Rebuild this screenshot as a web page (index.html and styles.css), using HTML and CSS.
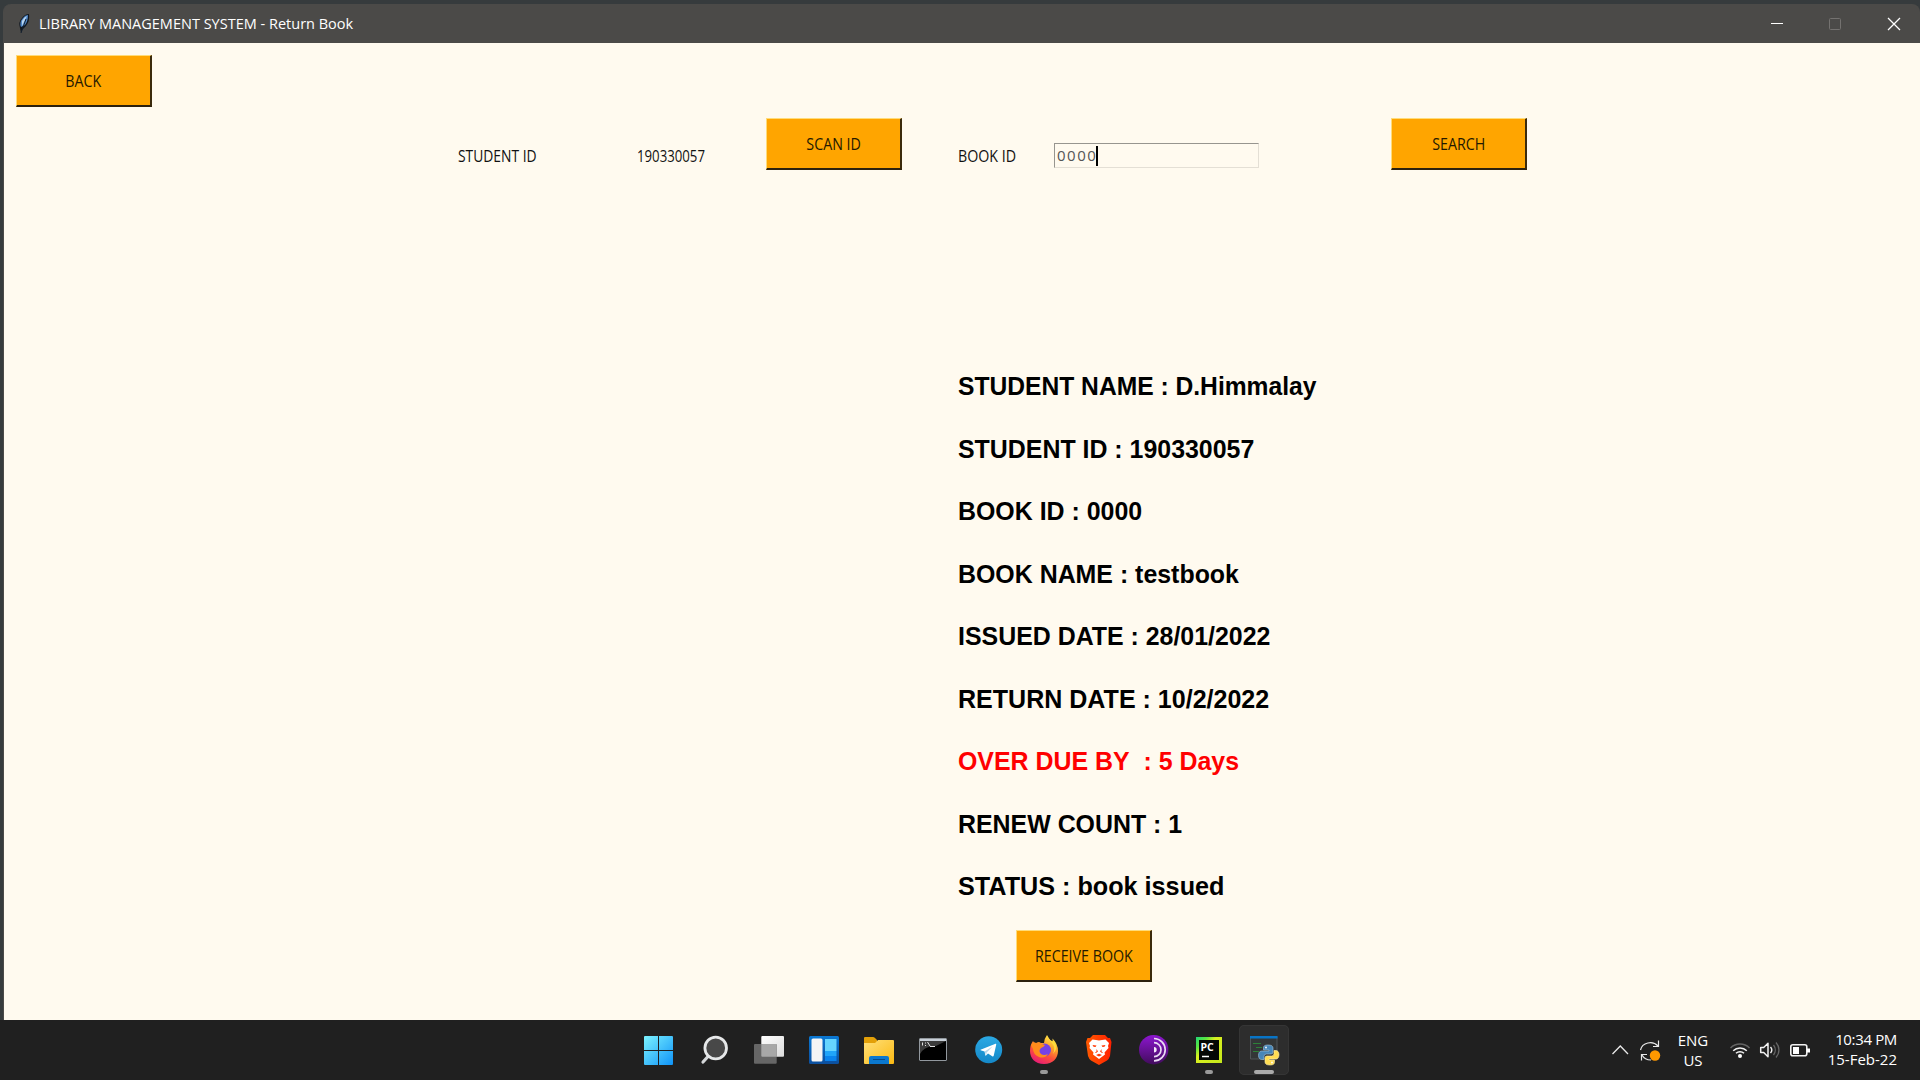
FILE: index.html
```html
<!DOCTYPE html>
<html lang="en">
<head>
<meta charset="utf-8">
<title>LIBRARY MANAGEMENT SYSTEM - Return Book</title>
<link rel="stylesheet" href="styles.css">
</head>
<body>
<div class="desktop">
  <main class="window">
    <header class="titlebar">
      <svg class="feather" width="12" height="20" viewBox="0 0 12 20"><path d="M3 19 2 14Q0 8 4 4 7 0 11 0 12 7 8 12L4 16z" fill="#111820"/><path d="M3 13Q1 8 5 4 7 1 10 1 10 7 7 11z" fill="#4f86c6"/><path d="M4 12 9 2Q6 3 4 7z" fill="#b9d5ee"/><path d="M3 19 8 5" stroke="#14202e"/></svg>
      <h1 class="title"><span class="fit fit-title">LIBRARY MANAGEMENT SYSTEM - Return Book</span></h1>
      <svg class="controls" width="130" height="14" viewBox="0 0 130 14" fill="none"><path d="M0 6.5h12" stroke="#fff"/><rect x="58.500" y="1.500" width="11" height="11" rx="1" stroke="#747270"/><path d="m117 1 12 12m0-12-12 12" stroke="#fff" stroke-width="1.300"/></svg>
    </header>
    <div class="client">
      <button class="btn"><span class="fit">BACK</span></button>
      <form class="query">
        <label class="label label-student"><span class="fit">STUDENT ID</span></label>
        <output class="label label-number"><span class="fit">190330057</span></output>
        <button class="btn" type="button"><span class="fit">SCAN ID</span></button>
        <label class="label label-book"><span class="fit">BOOK ID</span></label>
        <div class="entry"><span class="entry-text">0000</span><span class="caret"></span></div>
        <button class="btn btn-search" type="button"><span class="fit">SEARCH</span></button>
      </form>
      <section class="details">
        <p class="name">STUDENT NAME : D.Himmalay</p>
        <p>STUDENT ID : 190330057</p>
        <p>BOOK ID : 0000</p>
        <p>BOOK NAME : testbook</p>
        <p>ISSUED DATE : 28/01/2022</p>
        <p class="return-date">RETURN DATE : 10/2/2022</p>
        <p class="overdue">OVER DUE BY&nbsp; : 5 Days</p>
        <p>RENEW COUNT : 1</p>
        <p class="status-line">STATUS : book issued</p>
      </section>
      <button class="btn btn-receive"><span class="fit">RECEIVE BOOK</span></button>
    </div>
  </main>
  <footer class="taskbar">
    <nav class="apps">
      <svg class="app" viewBox="0 0 50 50"><defs><linearGradient id="win" x1="10" y1="11" x2="39" y2="40" gradientUnits="userSpaceOnUse"><stop stop-color="#7cf3ff"/><stop offset="1" stop-color="#0f93f8"/></linearGradient></defs><path d="M11 11h13v14H10V12q0-1 1-1zM25 11h13q1 0 1 1v13H25zM10 26h14v14H11q-1 0-1-1zM25 26h14v13q0 1-1 1H25z" fill="url(#win)"/></svg>
      <svg class="app" viewBox="0 0 50 50"><path d="m19 31.500-5 5.500" stroke="#d5d8da" stroke-width="3.200" stroke-linecap="round"/><circle cx="26.700" cy="23" r="10.800" fill="#484848" stroke="#e6e8e9" stroke-width="2.800"/></svg>
      <svg class="app" viewBox="0 0 50 50"><defs><linearGradient id="tv" x1="0" y1="0" x2="1" y2="1"><stop stop-color="#fff"/><stop offset="1" stop-color="#dcdcdc"/></linearGradient></defs><rect x="17.300" y="11" width="22.700" height="20.700" rx="1" fill="url(#tv)"/><rect x="10" y="19" width="22.700" height="19.700" rx="1" fill="#666"/><path d="M17.300 19h15.400v12.700H18.300q-1 0-1-1z" fill="#a8a8a8"/></svg>
      <svg class="app" viewBox="0 0 50 50"><defs><linearGradient id="wd" x1="0" y1="0" x2="0" y2="1"><stop stop-color="#0a78d4"/><stop offset="1" stop-color="#0c4f9e"/></linearGradient></defs><rect x="10" y="11" width="30" height="28" rx="1.500" fill="url(#wd)"/><rect x="12.500" y="13.500" width="11" height="23" rx="1.500" fill="#f5f5f5"/><path d="M26 14h11.500v12H26z" fill="#66d5ff"/><path d="M26 26h11.500v5H26z" fill="#20a5fa"/><path d="M26 31h11.500v5H26z" fill="#0a84ee"/></svg>
      <svg class="app" viewBox="0 0 50 50"><defs><linearGradient id="fd" x1="0" y1="0" x2="1" y2="1"><stop stop-color="#ffe07a"/><stop offset="1" stop-color="#fbb912"/></linearGradient></defs><path d="M10 20v-7q0-1 1-1h8q1 0 2 1l2 2v5z" fill="#e3a008"/><path d="M10 18h11l3-3h15q1 0 1 1v22q0 1-1 1H11q-1 0-1-1z" fill="url(#fd)"/><path d="M15 39v-6q0-2 2-2h16q2 0 2 2v6z" fill="#0b78cf"/><path d="M19 34.500h12" stroke="#074a89"/></svg>
      <svg class="app" viewBox="0 0 50 50"><rect x="10.500" y="13.500" width="27" height="22" rx=".5" fill="#000" stroke="#92989e"/><path d="M11 14h26v2H11z" fill="#c8d0d8"/><path d="M11 16h26l-10 5q-9 0-14 5l-2 3z" fill="#3b3b3b"/><path d="M13.500 17.500v3m3-3v1m0 1.500v1m2-4 2.500 4m0 .5h5" stroke="#e0e0e0" fill="none"/></svg>
      <svg class="app" viewBox="0 0 50 50"><defs><linearGradient id="tg" x1="0" y1="0" x2="0" y2="1"><stop stop-color="#2ba9e4"/><stop offset="1" stop-color="#1588c8"/></linearGradient></defs><circle cx="24.700" cy="24.700" r="13.500" fill="url(#tg)"/><path d="m16.500 24.700 15-6q1-.3.700 1l-2.500 11q-.4 1.300-1.500.5L24 28.500l-2 2q-.7.500-.8-.5l-.6-3.500-4-1.200z" fill="#fff"/><path d="m20.700 26.500 8-5.300-6 6.200-.7 3" fill="#b7d7ea"/></svg>
      <svg class="app" viewBox="0 0 50 50"><defs><linearGradient id="ff" x1=".8" y1="0" x2=".3" y2="1"><stop stop-color="#fff44f"/><stop offset=".35" stop-color="#ffa72b"/><stop offset=".65" stop-color="#ff5138"/><stop offset="1" stop-color="#e51a78"/></linearGradient></defs><path d="M25 39C16 39 11 33 11 26q0-6 3-10l2 3q2-2 4-2l2 1 3 0q0-4 3-8 2 4 5 7 1-1 .5-3.500Q39 19 39 26c0 7-5 13-14 13z" fill="url(#ff)"/><circle cx="25.500" cy="25" r="6.500" fill="#7542e5"/><path d="M12 20q2-4 5-2 4-1 6 1l3 1q-1 2-4 3-3 3 0 6 3 2 7 0-3 5-9 3-6-3-6-8z" fill="#ff8c1c"/><path d="M28 10q2 5 5 8 4 5 1 11 5-5 2-12l-3-1q-3-1-5-6z" fill="#ffdb3b"/></svg>
      <svg class="app" viewBox="0 0 50 50"><defs><linearGradient id="br"><stop stop-color="#ff5a00"/><stop offset="1" stop-color="#ff2000"/></linearGradient></defs><path d="M19 10h12l3 3 2 0 1.500 4L36 31q-1 3-3 4.500L25 40l-8-4.500Q15 34 14 31l-2-14 1.500-4 2.500 0z" fill="url(#br)"/><path d="m15 18 3.500-3.500L22 15l3 .5 3-.5 3.500-.5L35 18l-1 3 .5 2-4 4.500.5 2L25 34l-6-4.500.5-2-4-4.500.5-2z" fill="#fff"/><path d="m18.500 20 4 .5-1 1.500-2-.3zm13 0-4 .5 1 1.500 2-.3zM22.500 24l1.500 2.500-2 1.500-1-.5 1.500-1zm5 0L26 26.500l2 1.500 1-.5-1.500-1zM22 30l3-1.200 3 1.200-3 1.500z" fill="#ff3b08"/></svg>
      <svg class="app" viewBox="0 0 50 50"><defs><linearGradient id="tor" x1="0" y1="0" x2="0" y2="1"><stop stop-color="#8c16cf"/><stop offset="1" stop-color="#420c5d"/></linearGradient></defs><circle cx="24.700" cy="24.700" r="14.700" fill="url(#tor)"/><path d="M25 13.500a11.200 11.200 0 0 1 0 22.400M25 17.700a7 7 0 0 1 0 14" fill="none" stroke="#eadcf3" stroke-width="1.700"/><path d="M25 22a2.700 2.700 0 0 1 0 5.400z" fill="#f5eafa"/></svg>
      <svg class="app" viewBox="0 0 50 50"><defs><linearGradient id="pc" x1="0" y1="0" x2="1" y2="1"><stop stop-color="#20d878"/><stop offset=".22" stop-color="#5be640"/><stop offset=".4" stop-color="#d9f020"/><stop offset="1" stop-color="#c5e81c"/></linearGradient></defs><path d="M12 12h26v26H12z" fill="url(#pc)"/><path d="M15 15h20v20H15z" fill="#050805"/><text x="16.500" y="25.500" class="pc-text">PC</text><path d="M18 31.500h7" stroke="#fff" stroke-width="1.500"/></svg>
      <svg class="app active" viewBox="0 0 50 50"><path d="M11.500 11.500h26.500V34h-26.500z" fill="#333637" stroke="#515558"/><path d="M11 11h27.500v2.500H11z" fill="#0874c6"/><path d="M14 18.500h8m-5 4h6m-9 4h6" stroke="#2c8137"/><path d="M29 20c-4 0-4.500 1.500-4.500 3v2H30v1h-7.500c-2 0-3 2-3 4.500s1.500 4 3 4H25v-3q0-2.500 2.500-2.500H32q2 0 2-2v-4c0-2-1.500-3-5-3z" fill="#4786b8" stroke="#a5c6dc" stroke-width=".6"/><path d="M31 40c4 0 4.500-1.500 4.500-3v-2H30v-1h7c2 0 3-2 3-4.500s-1.500-4-3-4h-2v3q0 2.500-2.500 2.500H28q-2 0-2 2v4c0 2 1.500 3 5 3z" fill="#ffdc52" stroke="#fff2ad" stroke-width=".6"/><circle cx="27" cy="22.500" r=".9" fill="#fff"/><circle cx="33" cy="37.500" r=".9" fill="#fff"/></svg>
      <i class="mark mark-firefox"></i><i class="mark mark-pycharm"></i><i class="mark mark-python"></i>
    </nav>
    <div class="tray">
      <svg class="tray-icons" width="50" height="24" viewBox="0 0 50 24" fill="none" stroke="#e8e8e8"><path d="m.500 16 7.800-8 7.700 8" stroke-width="1.300"/><path d="M28.500 12A10 9 0 0 1 46 8m.500-5.500V8.500H41M29.500 22.500v-6H35M30 17a10 9 0 0 0 9 5" stroke-width="1.200"/><circle cx="43" cy="17.500" r="5.200" fill="#ff9800" stroke="none"/></svg>
      <div class="language"><span>ENG</span><span>US</span></div>
      <svg class="tray-icons status" width="80" height="18" viewBox="0 0 80 18" fill="none" stroke="#f2f2f2"><path d="M.5 7a13.500 13.500 0 0 1 19 0" stroke="#646464" stroke-width="1.500"/><path d="M3.200 9.700a9.700 9.700 0 0 1 13.600 0M6 12.300a5.700 5.700 0 0 1 8 0" stroke-width="1.500"/><circle cx="10" cy="15" r="2" fill="#fff" stroke="none"/><path d="M30.700 6.500h3l4.300-4.200v13.500l-4.300-4.300h-3z" stroke-width="1.500" stroke-linejoin="round"/><path d="M40.500 6a4.500 4.500 0 0 1 0 6" stroke-width="1.400"/><path d="M43.500 4a8 8 0 0 1 0 10M46 1.500a11 11 0 0 1 0 15" stroke="#666" stroke-width="1.300"/><rect x="60.800" y="3.800" width="16" height="11" rx="2" stroke-width="1.600"/><path d="M63 6h6v7h-6zM77 7.500h3v4h-3z" fill="#fff" stroke="none"/></svg>
      <div class="clock"><span>10:34 PM</span><span class="date">15-Feb-22</span></div>
    </div>
  </footer>
</div>
</body>
</html>
```
FILE: styles.css
```css
* { box-sizing: border-box; }
body { margin: 0; font-family: "Open Sans", "Noto Sans", sans-serif; }
h1, p { margin: 0; }
.desktop { width: 1920px; height: 1080px; display: flex; flex-direction: column; background: #363b3d; overflow: hidden; }
.window { margin: 4px 0 0 3px; height: 1016px; display: flex; flex-direction: column; border-left: 1px solid #4b4a48; border-radius: 8px 8px 0 0; background: #4b4a48; }
.titlebar { height: 39px; flex: none; display: flex; align-items: center; padding: 0 19px 0 14px; color: #fff; }
.title { margin-left: 9px; flex: 1; padding-bottom: 2px; font-size: 15px; font-weight: 400; line-height: 20px; white-space: nowrap; }
.fit { display: inline-block; white-space: nowrap; transform: scaleX(.89); }
.fit-title { transform-origin: left; transform: scaleX(.967); }
.controls { flex: none; }
.client { flex: 1; padding: 12px 0 0 12px; background: #fffaef; color: #111; display: flex; flex-direction: column; align-items: flex-start; }
.btn { width: 136px; height: 52px; flex: none; padding: 1px 0 0; border: 2px solid; border-color: #ffdc79 #3b2a0c #2c210e #ffdc79; border-top-width: 1px; border-left-width: 1px; background: #ffa500; color: #241900; font: 16px "Open Sans", "Noto Sans", sans-serif; }
.query { width: 100%; height: 52px; margin-top: 11px; padding-left: 442px; display: flex; }
.label { flex: none; padding-top: 27px; font-size: 16px; line-height: 22px; }
.label .fit { transform-origin: left; }
.label-student { width: 179px; }
.label-student .fit { transform: scaleX(.865); }
.label-number { width: 129px; }
.label-number .fit { transform: scaleX(.825); }
.label-book { width: 96px; margin-left: 56px; }
.entry { width: 205px; height: 25px; margin-top: 25px; padding-left: 2px; display: flex; align-items: center; border: 1px solid; border-color: #97958f #e4dfd5 #e4dfd5 #97958f; font-size: 15px; color: #555; }
.entry-text { letter-spacing: 1.500px; line-height: 20px; padding-bottom: 2px; }
.caret { width: 2px; height: 20px; background: #000; margin-left: -1px; }
.btn-search { margin-left: 132px; }
.details { margin: 185px 0 0 942px; font: bold 26px/62.500px "Liberation Sans", Arial, sans-serif; color: #000; white-space: nowrap; }
.details p { transform: scaleX(.958); transform-origin: left; width: max-content; }
.details .name { transform: scaleX(.947); }
.details .return-date { transform: scaleX(.963); }
.details .status-line { transform: scaleX(.969); }
.overdue { color: #f00; }
.btn-receive { margin: 12px 0 0 1000px; }
.taskbar { height: 60px; display: flex; background: #202020; padding-left: 634px; }
.apps { position: relative; display: flex; gap: 5px; padding-top: 5px; margin-right: auto; }
.app { width: 50px; height: 50px; }
.active { background: #2d2d2d; border-radius: 5px; outline: 1px solid #353535; outline-offset: -1px; }
.mark { position: absolute; top: 50px; height: 4px; width: 8px; border-radius: 2px; background: #9a9a9a; }
.mark-firefox { left: 406px; }
.mark-pycharm { left: 571px; }
.mark-python { left: 620px; width: 20px; background: #aaa; }
.pc-text { font: bold 10.500px "Open Sans", sans-serif; fill: #fff; }
.tray { display: flex; color: #fff; padding-right: 23px; font-size: 15px; line-height: 20px; }
.tray-icons { margin-top: 18px; flex: none; }
.status { margin-top: 21px; }
.language { width: 38px; margin: 10px 18px 0 12px; display: flex; flex-direction: column; align-items: center; }
.clock { width: 87px; padding-top: 9px; display: flex; flex-direction: column; align-items: flex-end; letter-spacing: -.35px; }
.date { letter-spacing: 0; }
```
